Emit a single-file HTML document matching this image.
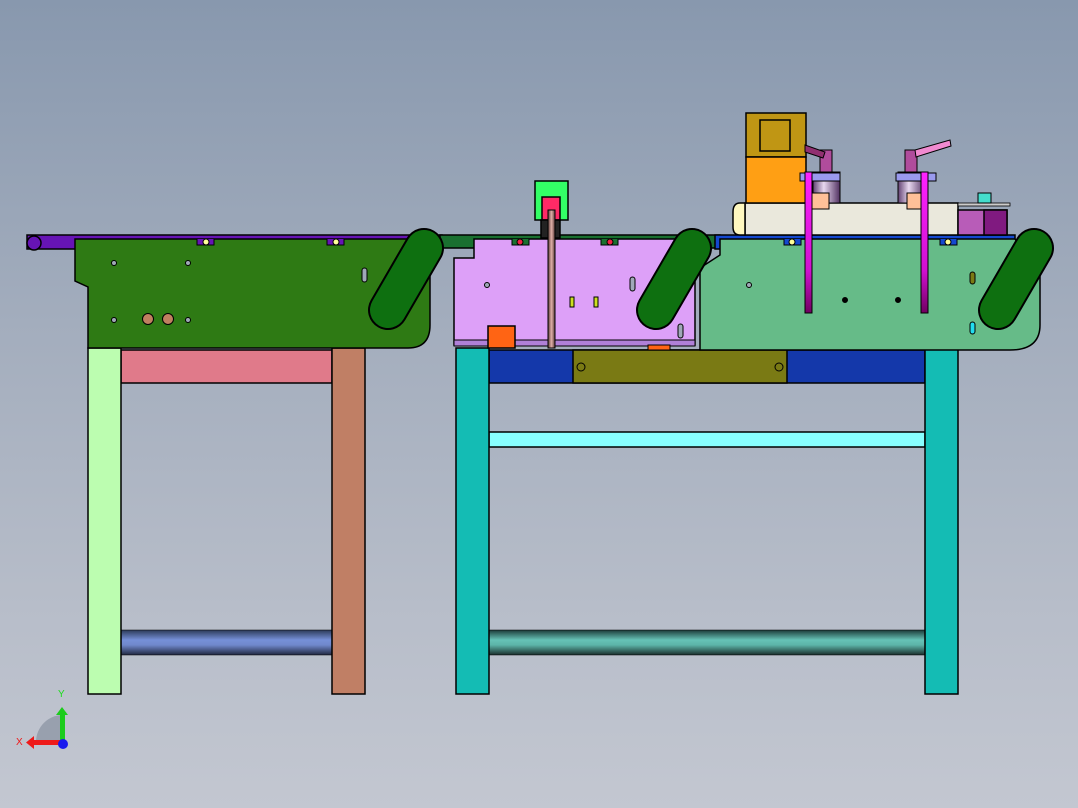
<!DOCTYPE html>
<html><head><meta charset="utf-8"><style>
html,body{margin:0;padding:0;width:1078px;height:808px;overflow:hidden}
body{background:linear-gradient(#8898ae 0%,#a3adbd 40%,#b7bdc9 75%,#c3c7d1 100%)}
svg{display:block}
text{font-family:"Liberation Sans",sans-serif}
</style></head><body>
<svg width="1078" height="808" viewBox="0 0 1078 808" xmlns="http://www.w3.org/2000/svg">
<defs>
<linearGradient id="tb" x1="0" y1="0" x2="0" y2="1"><stop offset="0" stop-color="#2c3a58"/><stop offset=".4" stop-color="#7690d8"/><stop offset=".6" stop-color="#7088cc"/><stop offset="1" stop-color="#202840"/></linearGradient>
<linearGradient id="tt" x1="0" y1="0" x2="0" y2="1"><stop offset="0" stop-color="#1c3a38"/><stop offset=".4" stop-color="#66c2b6"/><stop offset=".6" stop-color="#5cb4a8"/><stop offset="1" stop-color="#1a2e2c"/></linearGradient>
<linearGradient id="mg" x1="0" y1="0" x2="0" y2="1"><stop offset="0" stop-color="#ff22ff"/><stop offset=".7" stop-color="#d010d0"/><stop offset="1" stop-color="#700060"/></linearGradient>
<linearGradient id="cyl" x1="0" y1="0" x2="1" y2="0"><stop offset="0" stop-color="#604070"/><stop offset=".4" stop-color="#e8d8f0"/><stop offset="1" stop-color="#503060"/></linearGradient>
<linearGradient id="sh" x1="0" y1="0" x2="1" y2="0"><stop offset="0" stop-color="#5a3a38"/><stop offset=".5" stop-color="#e0b0a8"/><stop offset="1" stop-color="#5a3a38"/></linearGradient>
</defs>
<g stroke="#000" stroke-width="1.5">
<rect x="121" y="350" width="211" height="33" fill="#e07a8a"/>
<rect x="121" y="630" width="211" height="25" fill="url(#tb)" stroke-width=".5"/>
<rect x="88" y="348" width="33" height="346" fill="#bcfdb0"/>
<rect x="332" y="348" width="33" height="346" fill="#c07f65"/>
<rect x="489" y="350" width="436" height="33" fill="#1438aa"/>
<rect x="573" y="350" width="214" height="33" fill="#7a7a14"/>
<circle cx="581" cy="367" r="4" fill="none" stroke-width="1"/><circle cx="779" cy="367" r="4" fill="none" stroke-width="1"/>
<rect x="489" y="432" width="436" height="15" fill="#88ffff"/>
<rect x="489" y="630" width="436" height="25" fill="url(#tt)" stroke-width=".5"/>
<rect x="456" y="348" width="33" height="346" fill="#14bcb4"/>
<rect x="925" y="348" width="33" height="346" fill="#14bcb4"/>
<rect x="27" y="235" width="415" height="14" fill="#6614b4"/>
<circle cx="34" cy="243" r="7" fill="#6614b4"/>
<rect x="440" y="235" width="280" height="13" fill="#1a7030"/>
<rect x="715" y="235" width="300" height="14" fill="#1448d0"/>
<path d="M75 239 H408 V270 L430 270 V325 Q430 348 408 348 H88 V287 L75 281 Z" fill="#2e7a14"/>
<path d="M474 239 H695 V345 H454 V258 H474 Z" fill="#dda0f8"/>
<rect x="454" y="340" width="241" height="6" fill="#b080d8" stroke-width="1"/>
<path d="M720 239 H1015 L1040 270 V325 Q1040 350 1010 350 H700 V268 L720 255 Z" fill="#66bb88"/>
<rect x="745" y="203" width="213" height="32" fill="#eae8dc"/>
<path d="M745 203 H740 Q733 203 733 212 V227 Q733 235 740 235 H745 Z" fill="#fff8c0"/>
<rect x="958" y="210" width="49" height="25" fill="#b85cb8"/>
<rect x="984" y="210" width="23" height="25" fill="#801a80"/>
<rect x="958" y="203" width="52" height="3" fill="#ccc" stroke-width=".8"/>
<rect x="978" y="193" width="13" height="10" fill="#44ddcc" stroke-width="1"/>
<rect x="746" y="113" width="60" height="44" fill="#c09614"/>
<rect x="760" y="120" width="30" height="31" fill="none"/>
<rect x="746" y="157" width="60" height="46" fill="#ff9f14"/>
<rect x="813" y="172" width="27" height="31" fill="url(#cyl)" stroke-width="1"/>
<rect x="898" y="172" width="27" height="31" fill="url(#cyl)" stroke-width="1"/>
<rect x="800" y="173" width="40" height="8" fill="#9a9aee" stroke-width="1"/>
<rect x="896" y="173" width="40" height="8" fill="#9a9aee" stroke-width="1"/>
<rect x="820" y="150" width="12" height="22" fill="#b04c9c" stroke-width="1"/>
<rect x="905" y="150" width="12" height="22" fill="#b04c9c" stroke-width="1"/>
<path d="M805 145 L825 152 L823 158 L805 152Z" fill="#903070" stroke-width="1"/>
<path d="M915 150 L950 140 L951 146 L916 157Z" fill="#f08ad0" stroke-width="1"/>
<rect x="812" y="193" width="17" height="16" fill="#ffc098" stroke-width="1"/>
<rect x="907" y="193" width="17" height="16" fill="#ffc098" stroke-width="1"/>
<rect x="805" y="172" width="7" height="141" fill="url(#mg)" stroke-width="1"/>
<rect x="921" y="172" width="7" height="141" fill="url(#mg)" stroke-width="1"/>
<rect x="535" y="181" width="33" height="39" fill="#33ff66"/>
<rect x="542" y="197" width="18" height="23" fill="#ff2a66"/>
<rect x="541" y="220" width="19" height="18" fill="#222"/>
<rect x="548" y="210" width="7" height="138" fill="url(#sh)" stroke-width="1"/>
<rect x="488" y="326" width="27" height="22" fill="#ff6414"/>
<rect x="648" y="345" width="22" height="5" fill="#ff6414" stroke-width="1"/>
<g stroke-width="1">
<path d="M197 239 V245 H214 V239" fill="#6614b4"/><path d="M327 239 V245 H344 V239" fill="#6614b4"/>
<path d="M512 239 V245 H529 V239" fill="#1a7030"/><path d="M601 239 V245 H618 V239" fill="#1a7030"/>
<path d="M784 239 V245 H801 V239" fill="#1448d0"/><path d="M940 239 V245 H957 V239" fill="#1448d0"/>
</g>
<g stroke-linecap="round">
<line x1="424" y1="248" x2="388" y2="310" stroke="#000" stroke-width="40"/>
<line x1="424" y1="248" x2="388" y2="310" stroke="#0e7010" stroke-width="36"/>
<line x1="692" y1="248" x2="656" y2="310" stroke="#000" stroke-width="40"/>
<line x1="692" y1="248" x2="656" y2="310" stroke="#0e7010" stroke-width="36"/>
<line x1="1034" y1="248" x2="998" y2="310" stroke="#000" stroke-width="40"/>
<line x1="1034" y1="248" x2="998" y2="310" stroke="#0e7010" stroke-width="36"/>
</g>
</g>
<g fill="#a0a8b8" stroke="#000" stroke-width="1">
<circle cx="114" cy="263" r="2.5"/><circle cx="188" cy="263" r="2.5"/><circle cx="114" cy="320" r="2.5"/><circle cx="188" cy="320" r="2.5"/>
<circle cx="148" cy="319" r="5.5" fill="#c08060"/><circle cx="168" cy="319" r="5.5" fill="#c08060"/>
<rect x="362" y="268" width="5" height="14" rx="2.5"/>
<circle cx="487" cy="285" r="2.5"/><circle cx="749" cy="285" r="2.5"/>
<rect x="630" y="277" width="5" height="14" rx="2.5"/><rect x="678" y="324" width="5" height="14" rx="2.5"/>
<rect x="570" y="297" width="4" height="10" fill="#cce020"/><rect x="594" y="297" width="4" height="10" fill="#cce020"/>
<circle cx="845" cy="300" r="2.5" fill="#000"/><circle cx="898" cy="300" r="2.5" fill="#000"/>
<rect x="970" y="272" width="5" height="12" rx="2.5" fill="#7a7a14"/><rect x="970" y="322" width="5" height="12" rx="2.5" fill="#22ddee"/>
<circle cx="206" cy="242" r="3" fill="#ffff99"/><circle cx="336" cy="242" r="3" fill="#ffff99"/>
<circle cx="520" cy="242" r="3" fill="#ee2244"/><circle cx="610" cy="242" r="3" fill="#ee2244"/>
<circle cx="792" cy="242" r="3" fill="#ffff99"/><circle cx="948" cy="242" r="3" fill="#ffff99"/>
</g>
<path d="M36 742 A27 27 0 0 1 63 715 V742 Z" fill="#8f97a6" opacity=".8"/>
<rect x="60" y="713" width="5" height="30" fill="#1ccc1c"/>
<path d="M56 715 L62 707 L68 715Z" fill="#1ccc1c"/>
<rect x="32" y="740" width="30" height="5" fill="#ee1a1a"/>
<path d="M34 736 L26 742.5 L34 749Z" fill="#ee1a1a"/>
<circle cx="63" cy="744" r="5" fill="#1a1aee"/>
<text x="58" y="697" font-size="10" fill="#1cdd1c">Y</text>
<text x="16" y="745" font-size="10" fill="#ee1a1a">X</text>
</svg>
</body></html>
